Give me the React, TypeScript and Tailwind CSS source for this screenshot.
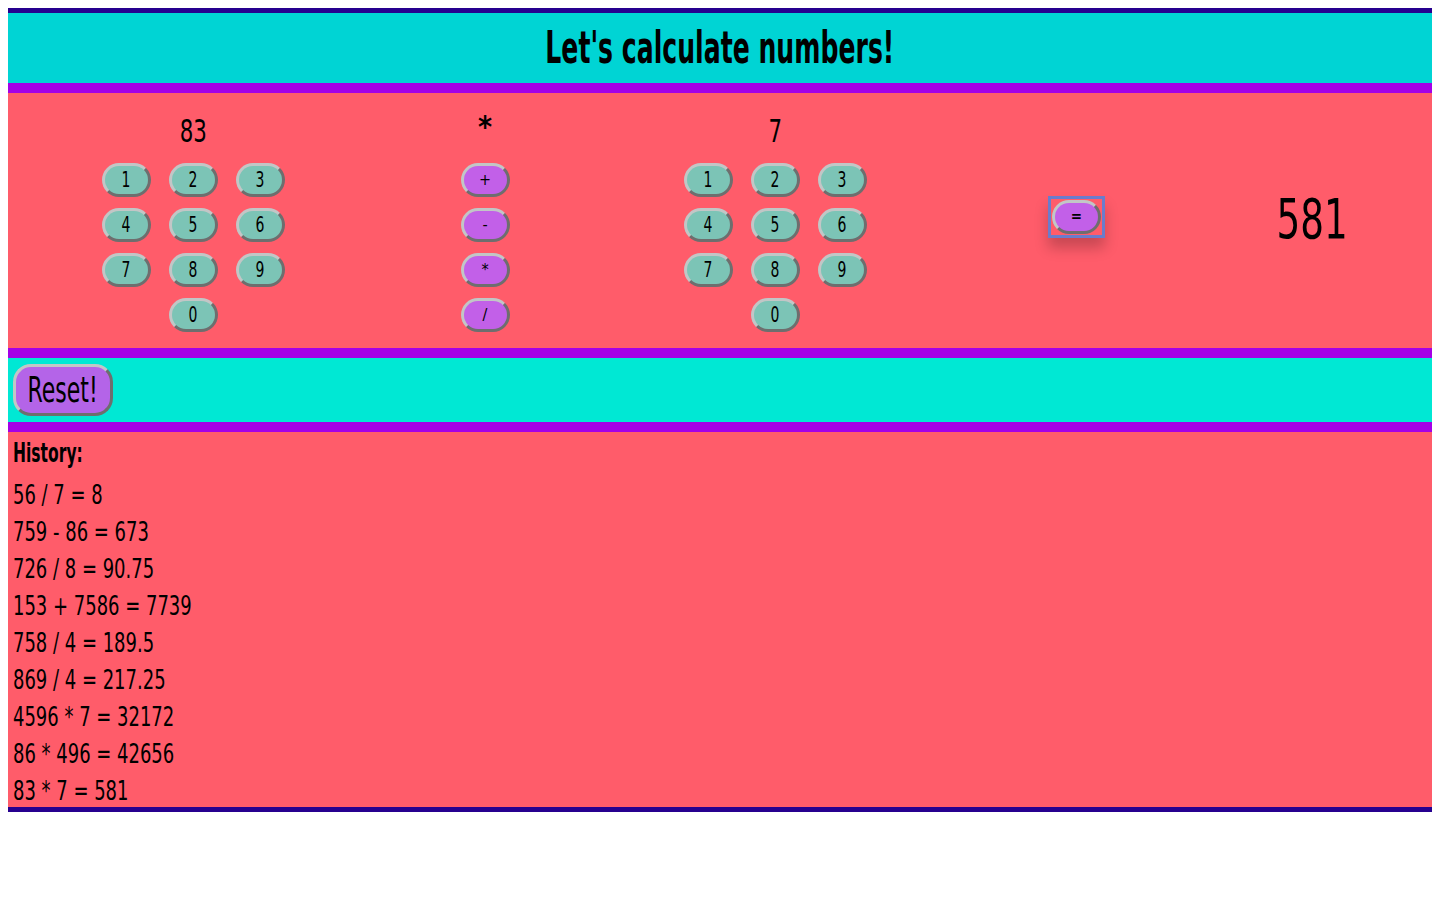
import { useState } from 'react'

const FONT = "font-['DejaVu_Sans_Condensed','DejaVu_Sans',sans-serif]"

const HISTORY = [
  '56 / 7 = 8',
  '759 - 86 = 673',
  '726 / 8 = 90.75',
  '153 + 7586 = 7739',
  '758 / 4 = 189.5',
  '869 / 4 = 217.25',
  '4596 * 7 = 32172',
  '86 * 496 = 42656',
  '83 * 7 = 581',
]

const pill =
  'w-[49px] h-[34px] rounded-full border-[3px] border-t-[#c2c6c6] border-l-[#c2c6c6] border-b-[#6e6e6e] border-r-[#6e6e6e] flex items-center justify-center text-black'

// narrow text, to get close to the tall condensed face of the original
function Narrow({ children, left }: { children: React.ReactNode; left?: boolean }) {
  return (
    <span className={`inline-block whitespace-nowrap scale-x-[0.74] ${left ? 'origin-left' : 'origin-center'}`}>
      {children}
    </span>
  )
}

function NumPad({ value }: { value: string }) {
  const digits = ['1', '2', '3', '4', '5', '6', '7', '8', '9']
  return (
    <div className="w-[183px] flex flex-col items-center pt-[16px]">
      <div className="h-[44px] text-[32px] leading-[44px]"><Narrow>{value}</Narrow></div>
      <div className="mt-[10px] grid grid-cols-3 gap-x-[18px] gap-y-[11px]">
        {digits.map(d => (
          <button key={d} className={`${pill} bg-[#7cc4b6] text-[21px] pt-[1px]`}><Narrow>{d}</Narrow></button>
        ))}
        <div />
        <button className={`${pill} bg-[#7cc4b6] text-[21px] pt-[1px]`}><Narrow>0</Narrow></button>
      </div>
    </div>
  )
}

export default function App() {
  const [op] = useState('*')

  return (
    <div className={`m-2 ${FONT} text-black`}>
      {/* Header */}
      <div className="border-t-[5px] border-[#26008f] bg-[#00d4d4] h-[75px] flex items-center justify-center">
        <h1 className="text-[44px] font-bold leading-none">
          <span className="inline-block whitespace-nowrap scale-x-[0.635]">Let's calculate numbers!</span>
        </h1>
      </div>
      <div className="h-[10px] bg-[#a400e6]" />

      {/* Calculator */}
      <div className="bg-[#ff5c6a] h-[255px] flex items-start">
        <div className="ml-[94px]">
          <NumPad value="83" />
        </div>

        <div className="ml-[175px] w-[50px] flex flex-col items-center pt-[16px]">
          <div className="h-[44px] text-[30px] leading-[44px] -mt-[4px] mb-[4px] font-bold">{op}</div>
          <div className="mt-[10px] flex flex-col gap-[11px]">
            {['+', '-', '*', '/'].map(o => (
              <button key={o} className={`${pill} bg-[#c260e8] text-[16px]`}>{o}</button>
            ))}
          </div>
        </div>

        <div className="ml-[174px]">
          <NumPad value="7" />
        </div>

        <div className="ml-[181px] self-center -mt-[8px] border-[3px] border-[#6a7ccc] p-[1px] shadow-[0_10px_14px_rgba(0,0,0,0.22)]">
          <button className={`${pill} w-[48px] bg-[#c260e8] text-[15px] font-bold`}>=</button>
        </div>

        <div className="ml-[147px] w-[120px] self-center -mt-[4px] text-center text-[56px] leading-none">
          <Narrow>581</Narrow>
        </div>
      </div>
      <div className="h-[10px] bg-[#a400e6]" />

      {/* Reset */}
      <div className="bg-[#00e8d4] h-[64px] flex items-center px-[5px]">
        <button className="w-[100px] h-[52px] rounded-[18px] bg-[#b464e8] border-[3px] border-t-[#c2c6c6] border-l-[#c2c6c6] border-b-[#6e6e6e] border-r-[#6e6e6e] text-[36px] leading-none flex items-center justify-center">
          <span className="inline-block whitespace-nowrap scale-x-[0.68]">Reset!</span>
        </button>
      </div>
      <div className="h-[10px] bg-[#a400e6]" />

      {/* History */}
      <div className="bg-[#ff5c6a] h-[380px] border-b-[5px] border-[#26008f] px-[5px] pt-[6px] overflow-hidden">
        <div className="text-[27px] font-bold leading-[30px] mb-[8px]">
          <span className="inline-block whitespace-nowrap scale-x-[0.64] origin-left">History:</span>
        </div>
        {HISTORY.map((h, i) => (
          <div key={i} className="text-[27px] leading-[37px]"><Narrow left>{h}</Narrow></div>
        ))}
      </div>
    </div>
  )
}
